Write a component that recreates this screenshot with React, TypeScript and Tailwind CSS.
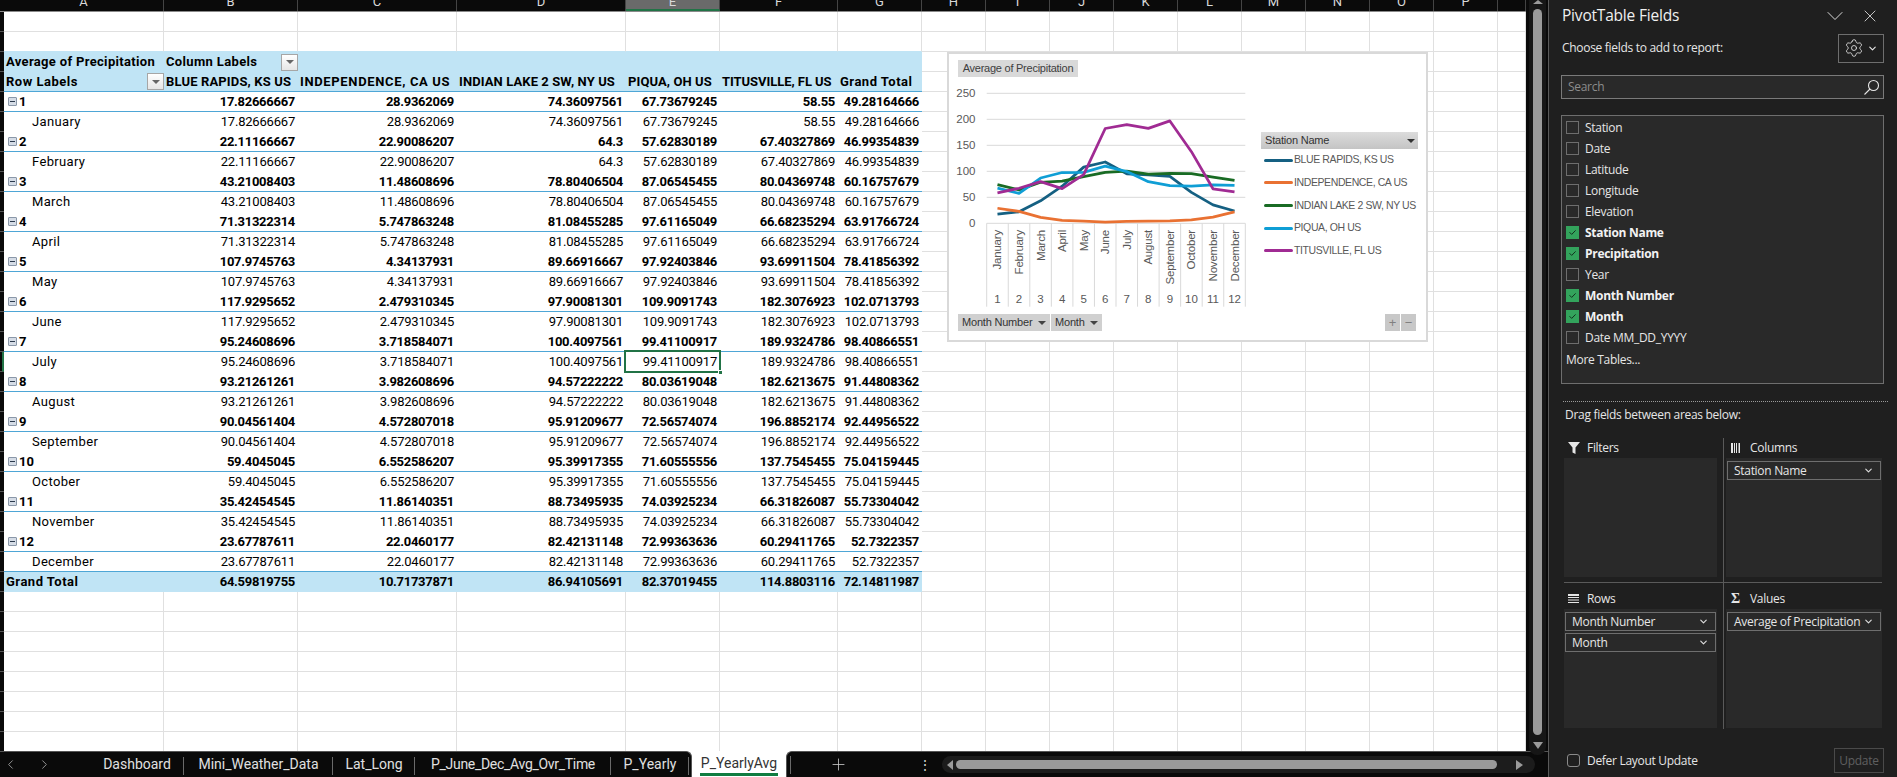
import { ChevronDown, ChevronLeft, ChevronRight, Plus, Settings, X } from "lucide-react";

const COLS = [160, 134, 159, 169, 94, 118, 84, 64, 64, 64, 64, 64, 64, 64, 64, 64, 28];
const LETTERS = ["A", "B", "C", "D", "E", "F", "G", "H", "I", "J", "K", "L", "M", "N", "O", "P", ""];
const STATIONS = [
  { name: "BLUE RAPIDS, KS US", track: "tracking-[0.15px]" },
  { name: "INDEPENDENCE, CA US", track: "tracking-[0.65px]" },
  { name: "INDIAN LAKE 2 SW, NY US", track: "tracking-[0.1px]" },
  { name: "PIQUA, OH US", track: "tracking-[0.1px]" },
  { name: "TITUSVILLE, FL US", track: "tracking-[-0.05px]" },
  { name: "Grand Total", track: "tracking-[0.5px]" },
];
const MONTHS = ["January", "February", "March", "April", "May", "June", "July", "August", "September", "October", "November", "December"];

const VALUES = [
  ["17.82666667", "28.9362069", "74.36097561", "67.73679245", "58.55", "49.28164666"],
  ["22.11166667", "22.90086207", "64.3", "57.62830189", "67.40327869", "46.99354839"],
  ["43.21008403", "11.48608696", "78.80406504", "87.06545455", "80.04369748", "60.16757679"],
  ["71.31322314", "5.747863248", "81.08455285", "97.61165049", "66.68235294", "63.91766724"],
  ["107.9745763", "4.34137931", "89.66916667", "97.92403846", "93.69911504", "78.41856392"],
  ["117.9295652", "2.479310345", "97.90081301", "109.9091743", "182.3076923", "102.0713793"],
  ["95.24608696", "3.718584071", "100.4097561", "99.41100917", "189.9324786", "98.40866551"],
  ["93.21261261", "3.982608696", "94.57222222", "80.03619048", "182.6213675", "91.44808362"],
  ["90.04561404", "4.572807018", "95.91209677", "72.56574074", "196.8852174", "92.44956522"],
  ["59.4045045", "6.552586207", "95.39917355", "71.60555556", "137.7545455", "75.04159445"],
  ["35.42454545", "11.86140351", "88.73495935", "74.03925234", "66.31826087", "55.73304042"],
  ["23.67787611", "22.0460177", "82.42131148", "72.99363636", "60.29411765", "52.7322357"],
];
const TOTALS = ["64.59819755", "10.71737871", "86.94105691", "82.37019455", "114.8803116", "72.14811987"];

const SERIES = [
  { name: "BLUE RAPIDS, KS US", color: "#156082", col: 0 },
  { name: "INDEPENDENCE, CA US", color: "#e97132", col: 1 },
  { name: "INDIAN LAKE 2 SW, NY US", color: "#196b24", col: 2 },
  { name: "PIQUA, OH US", color: "#0f9ed5", col: 3 },
  { name: "TITUSVILLE, FL US", color: "#a02b93", col: 4 },
];

const FIELDS = [
  { name: "Station", on: false },
  { name: "Date", on: false },
  { name: "Latitude", on: false },
  { name: "Longitude", on: false },
  { name: "Elevation", on: false },
  { name: "Station Name", on: true },
  { name: "Precipitation", on: true },
  { name: "Year", on: false },
  { name: "Month Number", on: true },
  { name: "Month", on: true },
  { name: "Date MM_DD_YYYY", on: false },
];

function Tri({ className = "border-t-[#595959]" }: { className?: string }) {
  return <span className={`inline-block w-0 h-0 border-x-[4px] border-x-transparent border-t-[4px] ${className}`} />;
}

function FilterButton() {
  return (
    <span className="w-[17px] h-[17px] shrink-0 flex items-center justify-center bg-gradient-to-b from-white to-[#e6e6e6] border border-[#a6a6a6]">
      <Tri className="border-t-[#666666]" />
    </span>
  );
}

function Cell({ w, className = "", children }: { w: number; className?: string; children?: React.ReactNode }) {
  return (
    <div className={`h-full shrink-0 flex items-center ${className}`} style={{ width: w }}>
      {children}
    </div>
  );
}

function PlainRest({ from }: { from: number }) {
  return (
    <>
      {COLS.slice(from).map((w, i) => (
        <Cell key={i} w={w} className="border-r border-b border-[#e0e0e0]" />
      ))}
    </>
  );
}

function Row({ children, mark }: { children: React.ReactNode; mark?: boolean }) {
  return (
    <div className="flex h-[20px] shrink-0">
      <div className={`w-[4px] h-full shrink-0 border-b border-[#555555] ${mark ? "bg-[#0a0a0a] border-r-2 border-r-[#217346]" : "bg-[#0a0a0a]"}`} />
      {children}
    </div>
  );
}

function ValueCells({ values, kind, selected }: { values: string[]; kind: string; selected?: number }) {
  const bold = kind === "bold" || kind === "total";
  const line = kind === "bold" || kind === "lastMonth" ? "border-b border-[#4ea6d6]" : "";
  return (
    <>
      {values.map((v, i) => (
        <Cell
          key={i}
          w={COLS[i + 1]}
          className={`justify-end pr-[3px] relative ${line} ${kind === "total" ? "bg-[#c0e4f5]" : ""} ${bold ? "font-bold tracking-[-0.28px]" : "tracking-[-0.2px]"}`}
        >
          {v}
          {selected === i && (
            <div className="absolute left-[-2px] top-[-2px] w-[97px] h-[23px] border-2 border-[#217346]">
              <span className="absolute right-[-4px] bottom-[-4px] w-[5px] h-[5px] bg-[#217346] border border-white" />
            </div>
          )}
        </Cell>
      ))}
    </>
  );
}

function Minus() {
  return (
    <span className="w-[9px] h-[9px] mr-[2px] shrink-0 flex items-center justify-center bg-[#d5dce6] border border-[#8a97a8] rounded-[1px]">
      <span className="w-[5px] h-px bg-[#2b3a4d]" />
    </span>
  );
}

function Sheet() {
  const rows: React.ReactNode[] = [];
  rows.push(
    <Row key="e1">
      <PlainRest from={0} />
    </Row>
  );
  rows.push(
    <Row key="e2">
      {COLS.slice(0, 7).map((w, i) => (
        <Cell key={i} w={w} className="border-r border-b border-[#e0e0e0] border-b-[#c0e4f5]" />
      ))}
      <PlainRest from={7} />
    </Row>
  );
  rows.push(
    <Row key="h1">
      <Cell w={160} className="bg-[#c0e4f5] font-bold pl-[2px] tracking-[0.33px] whitespace-nowrap">
        Average of Precipitation
      </Cell>
      <Cell w={134} className="bg-[#c0e4f5] font-bold pl-[2px] justify-between tracking-[0.35px]">
        Column Labels
        <FilterButton />
      </Cell>
      {COLS.slice(2, 7).map((w, i) => (
        <Cell key={i} w={w} className="bg-[#c0e4f5]" />
      ))}
      <PlainRest from={7} />
    </Row>
  );
  rows.push(
    <Row key="h2">
      <Cell w={160} className="bg-[#c0e4f5] border-b border-[#4ea6d6] font-bold pl-[2px] justify-between tracking-[0.5px]">
        Row Labels
        <FilterButton />
      </Cell>
      {STATIONS.map((s, i) => (
        <Cell key={i} w={COLS[i + 1]} className={`bg-[#c0e4f5] border-b border-[#4ea6d6] font-bold pl-[2px] whitespace-nowrap ${s.track}`}>
          {s.name}
        </Cell>
      ))}
      <PlainRest from={7} />
    </Row>
  );
  MONTHS.forEach((m, i) => {
    rows.push(
      <Row key={`n${i}`}>
        <Cell w={160} className="border-b border-[#4ea6d6] font-bold pl-[4px]">
          <Minus />
          {i + 1}
        </Cell>
        <ValueCells values={VALUES[i]} kind="bold" />
        <PlainRest from={7} />
      </Row>
    );
    rows.push(
      <Row key={`m${i}`} mark={i === 6}>
        <Cell w={160} className={`pl-[28px] tracking-[0.35px] ${i === 11 ? "border-b border-[#4ea6d6]" : ""}`}>
          {m}
        </Cell>
        <ValueCells values={VALUES[i]} kind={i === 11 ? "lastMonth" : "month"} selected={i === 6 ? 3 : undefined} />
        <PlainRest from={7} />
      </Row>
    );
  });
  rows.push(
    <Row key="total">
      <Cell w={160} className="bg-[#c0e4f5] font-bold pl-[2px] tracking-[0.5px]">
        Grand Total
      </Cell>
      <ValueCells values={TOTALS} kind="total" />
      <PlainRest from={7} />
    </Row>
  );
  for (let i = 0; i < 8; i++) {
    rows.push(
      <Row key={`t${i}`}>
        <PlainRest from={0} />
      </Row>
    );
  }

  return (
    <div className="w-[1526px] h-[751px] flex flex-col overflow-hidden relative bg-white">
      <div className="flex h-[12px] shrink-0 bg-[#0a0a0a] border-b border-[#8a8a8a] overflow-hidden">
        <div className="w-[4px] shrink-0" />
        {COLS.map((w, i) => (
          <div
            key={i}
            style={{ width: w }}
            className={`shrink-0 h-full text-center leading-[4px] text-[13px] border-r border-[#444444] text-[#d9d9d9] ${i === 4 ? "bg-[#6a6a6a] border-b-2 border-b-[#217346]" : ""}`}
          >
            {LETTERS[i]}
          </div>
        ))}
      </div>
      <div className="flex flex-col text-[13px] text-black">{rows}</div>
      <Chart />
    </div>
  );
}

function Chart() {
  const px = (i: number) => 37.7 + 21.55 * (i + 0.5);
  const py = (v: number) => 146.3 - 0.52 * v;
  const ticks = [250, 200, 150, 100, 50, 0];
  return (
    <div className="absolute left-[947px] top-[52px] w-[481px] h-[290px] bg-white border-2 border-[#d9d9d9] pt-[6px] pl-[9px] flex flex-col font-['Liberation_Sans',sans-serif] text-[#404040]">
      <div className="h-[17px] w-[120px] bg-[#d9d9d9] flex items-center justify-center text-[11px] tracking-[-0.25px] shrink-0">
        Average of Precipitation
      </div>
      <div className="flex h-[235px] shrink-0 -ml-[9px]">
        <svg width="300" height="235" viewBox="0 0 300 235" className="shrink-0">
          {ticks.map((t) => (
            <line key={t} x1="37.7" x2="296.3" y1={py(t)} y2={py(t)} stroke="#d9d9d9" />
          ))}
          {ticks.map((t) => (
            <text key={t} x="26.5" y={py(t) + 4} textAnchor="end" fontSize="11.5" fill="#595959">
              {t}
            </text>
          ))}
          {Array.from({ length: 13 }).map((_, i) => (
            <line key={i} x1={37.7 + 21.55 * i} x2={37.7 + 21.55 * i} y1="146.3" y2="229.7" stroke="#d9d9d9" />
          ))}
          {MONTHS.map((m, i) => (
            <text
              key={m}
              transform={`translate(${px(i) + 4},153) rotate(-90)`}
              textAnchor="end"
              fontSize="11.5"
              letterSpacing="-0.2"
              fill="#595959"
            >
              {m}
            </text>
          ))}
          {MONTHS.map((m, i) => (
            <text key={m} x={px(i)} y="226" textAnchor="middle" fontSize="11.5" fill="#595959">
              {i + 1}
            </text>
          ))}
          {SERIES.map((s) => (
            <polyline
              key={s.name}
              fill="none"
              stroke={s.color}
              strokeWidth="2.75"
              strokeLinejoin="round"
              points={VALUES.map((r, i) => `${px(i)},${py(parseFloat(r[s.col]))}`).join(" ")}
            />
          ))}
        </svg>
        <div className="ml-[12px] mt-[55px] w-[157px] flex flex-col">
          <div className="h-[17px] bg-gradient-to-b from-[#dcdcdc] to-[#c4c4c4] flex items-center justify-between pl-[4px] pr-[3px] text-[11px] tracking-[-0.2px] text-[#333333]">
            Station Name
            <Tri className="border-t-[#333333]" />
          </div>
          {SERIES.map((s) => (
            <div key={s.name} className="h-[22.6px] flex items-center text-[10.5px] tracking-[-0.4px] text-[#595959] whitespace-nowrap">
              <span className="w-[29px] h-[3px] ml-[3px] mr-[1px] shrink-0 rounded-full" style={{ backgroundColor: s.color }} />
              {s.name}
            </div>
          ))}
        </div>
      </div>
      <div className="flex items-center h-[17px] mt-[2px] pr-[10px] text-[#333333] text-[11px] tracking-[-0.2px]">
        <div className="w-[92px] h-full bg-[#d0d0d0] flex items-center justify-between px-[4px]">
          Month Number
          <Tri className="border-t-[#444444]" />
        </div>
        <div className="w-[51px] ml-px h-full bg-[#d0d0d0] flex items-center justify-between px-[4px]">
          Month
          <Tri className="border-t-[#444444]" />
        </div>
        <div className="ml-auto w-[15px] h-full bg-[#c8c8c8] flex items-center justify-center text-[13px] text-[#808080]">+</div>
        <div className="ml-px w-[15px] h-full bg-[#c8c8c8] flex items-center justify-center text-[13px] text-[#808080]">−</div>
      </div>
    </div>
  );
}

function VScroll() {
  return (
    <div className="w-[22px] h-[751px] bg-[#0a0a0a] pl-[3px] pr-[2px]">
      <div className="h-[755px] w-[17px] bg-[#161616] rounded-b-[8px] flex flex-col items-center overflow-hidden relative">
        <span className="w-0 h-0 border-x-[5px] border-x-transparent border-b-[4px] border-b-[#9a9a9a]" />
        <div className="mt-[5px] w-[9px] h-[726px] bg-[#9a9a9a] rounded-full" />
        <span className="mt-[7px] w-0 h-0 border-x-[5px] border-x-transparent border-t-[7px] border-t-[#9a9a9a]" />
      </div>
    </div>
  );
}

function SheetTab({ w, label, className = "" }: { w: number; label: string; className?: string }) {
  return (
    <div className={`h-full flex items-center justify-center relative ${className}`} style={{ width: w }}>
      {label}
      <span className="absolute right-0 top-[5px] h-[18px] w-px bg-[#6a6a6a]" />
    </div>
  );
}

function TabsBar() {
  return (
    <div className="h-[26px] flex bg-white text-[14px] text-[#e0e0e0] font-['Roboto',sans-serif]">
      <div className="w-[692px] h-full flex bg-[#0a0a0a] rounded-tr-[6px] border-t border-r border-[#555555]">
        <div className="w-[90px] flex items-center text-[#9a9a9a] pl-[3px] gap-[19px]">
          <ChevronLeft size={15} strokeWidth={1.5} />
          <ChevronRight size={15} strokeWidth={1.5} />
        </div>
        <SheetTab w={94} label="Dashboard" />
        <SheetTab w={149} label="Mini_Weather_Data" />
        <SheetTab w={82} label="Lat_Long" />
        <SheetTab w={196} label="P_June_Dec_Avg_Ovr_Time" className="tracking-[-0.3px]" />
        <SheetTab w={78} label="P_Yearly" />
      </div>
      <div className="w-[94px] h-full flex flex-col items-center text-[#333333] pt-[2px]">
        <span className="border-b-[3px] border-[#107c41] w-[78px] h-[23px] text-center leading-[20px]">P_YearlyAvg</span>
      </div>
      <div className="flex-1 h-full flex items-center bg-[#0a0a0a] rounded-tl-[6px] border-t border-l border-[#555555]">
        <span className="ml-[3px] h-[18px] w-px bg-[#6a6a6a]" />
        <Plus size={19} strokeWidth={1} className="ml-[38px] text-[#d0d0d0]" />
        <span className="ml-[70px] text-[14px] leading-none text-[#d0d0d0]">⋮</span>
        <div className="ml-[10px] w-[593px] h-[17px] bg-[#1c1c1c] rounded-full flex items-center pl-[5px]">
          <span className="w-0 h-0 border-y-[5px] border-y-transparent border-r-[6px] border-r-[#9a9a9a]" />
          <span className="ml-[3px] w-[541px] h-[9px] rounded-full bg-[#9a9a9a]" />
          <span className="ml-[19px] w-0 h-0 border-y-[5px] border-y-transparent border-l-[7px] border-l-[#9a9a9a]" />
        </div>
      </div>
    </div>
  );
}

function Checkbox({ on }: { on: boolean }) {
  if (on) {
    return (
      <span className="w-[13px] h-[13px] shrink-0 bg-[#33a35c] flex items-center justify-center">
        <svg width="9" height="9" viewBox="0 0 9 9" fill="none">
          <path d="M1.5 4.2 3.7 6.4 7.6 2.4" stroke="#12331f" strokeWidth="1" />
        </svg>
      </span>
    );
  }
  return <span className="w-[13px] h-[13px] shrink-0 border border-[#6e6e6e]" />;
}

function Pill({ label }: { label: string }) {
  return (
    <div className="h-[19px] border border-[#6e6e6e] flex items-center justify-between pl-[6px] pr-[6px] mb-[2px] text-[#e6e6e6]">
      {label}
      <ChevronDown size={11} strokeWidth={2.5} className="text-[#dddddd]" />
    </div>
  );
}

function Zone({ icon, title, fields, right, bottom }: { icon: React.ReactNode; title: string; fields: string[]; right?: boolean; bottom?: boolean }) {
  return (
    <div className={`${bottom ? "h-[146px] pt-[6px]" : "h-[145px] border-b border-[#5a5a5a]"} ${right ? "pl-[2px]" : "pr-[6px] border-r border-[#5a5a5a]"}`}>
      <div className={`h-[20px] flex items-center ${right ? "pl-[5px]" : "pl-[4px]"}`}>
        <span className="w-[19px] shrink-0 flex items-center">{icon}</span>
        {title}
      </div>
      <div className="h-[119px] bg-[#292929] px-px pt-[3px]">
        {fields.map((f) => (
          <Pill key={f} label={f} />
        ))}
      </div>
    </div>
  );
}

function Panel() {
  return (
    <div className="w-[349px] h-[777px] bg-[#1f1f1f] border-l border-[#5a5a5a] text-[#e6e6e6] text-[12px] tracking-[-0.3px] font-['Open_Sans',sans-serif] overflow-hidden">
      <div className="h-[32px] flex items-center pl-[13px] pr-[17px]">
        <span className="text-[15.5px] text-[#f0f0f0] tracking-[-0.2px]">PivotTable Fields</span>
        <ChevronDown size={28} strokeWidth={0.8} className="ml-auto mr-[11px]" />
        <X size={20} strokeWidth={1} />
      </div>
      <div className="h-[28px] mt-[2px] flex items-center justify-between pl-[13px] pr-[13px]">
        Choose fields to add to report:
        <div className="w-[46px] h-[29px] border border-[#6e6e6e] flex items-center justify-center gap-[3px]">
          <Settings size={20} strokeWidth={1} />
          <ChevronDown size={11} strokeWidth={2.5} />
        </div>
      </div>
      <div className="h-[24px] mt-[13px] ml-[12px] mr-[13px] border border-[#7a7a7a] bg-[#292929] flex items-center justify-between pl-[6px] pr-[3px] text-[#8c8c8c]">
        Search
        <svg width="17" height="17" viewBox="0 0 17 17" fill="none" stroke="#e6e6e6" strokeWidth="1.1">
          <circle cx="10.5" cy="6.5" r="5" />
          <path d="M7 10 1.5 15.5" />
        </svg>
      </div>
      <div className="h-[269px] mt-[16px] ml-[12px] mr-[13px] border border-[#6e6e6e] bg-[#292929] pl-[4px] pt-[1px]">
        {FIELDS.map((f) => (
          <div key={f.name} className={`h-[21px] flex items-center gap-[6px] ${f.on ? "font-bold text-[#f2f2f2]" : ""}`}>
            <Checkbox on={f.on} />
            {f.name}
          </div>
        ))}
        <div className="mt-[2px] h-[20px] flex items-center">More Tables...</div>
      </div>
      <div className="mt-[17px] ml-[14px] mr-[9px] border-t border-dotted border-[#9a9a9a]" />
      <div className="ml-[16px] mt-[3px] h-[19px] flex items-center">Drag fields between areas below:</div>
      <div className="grid grid-cols-[160px_158px] ml-[15px] mt-[14px]">
        <Zone
          title="Filters"
          fields={[]}
          icon={
            <svg width="12" height="12" viewBox="0 0 12 12" fill="#e6e6e6">
              <path d="M0 0h12L7.5 5.5V12l-3-1.5V5.5z" />
            </svg>
          }
        />
        <Zone
          right
          title="Columns"
          fields={["Station Name"]}
          icon={
            <svg width="10" height="10" viewBox="0 0 10 10" fill="#e6e6e6">
              <path d="M0 0h2v10H0zM3 0h1v10H3zM5 0h1v10H5zM7.5 0h1.5v10H7.5z" />
            </svg>
          }
        />
        <Zone
          bottom
          title="Rows"
          fields={["Month Number", "Month"]}
          icon={
            <svg width="11" height="10" viewBox="0 0 11 10" fill="#e6e6e6">
              <path d="M0 0h11v2H0zM0 3h11v1H0zM0 5.5h11v1H0zM0 8h11v1H0z" />
            </svg>
          }
        />
        <Zone
          right
          bottom
          title="Values"
          fields={["Average of Precipitation"]}
          icon={<span className="font-['Liberation_Serif',serif] font-bold text-[14px] leading-none">Σ</span>}
        />
      </div>
      <div className="mt-[19px] ml-[18px] mr-[13px] flex items-center">
        <span className="w-[13px] h-[13px] border border-[#8a8a8a] rounded-[3px] mr-[7px]" />
        Defer Layout Update
        <div className="ml-auto w-[50px] h-[25px] border border-[#4a4a4a] flex items-center justify-center text-[#5f5f5f]">Update</div>
      </div>
    </div>
  );
}

export default function App() {
  return (
    <div className="w-[1897px] h-[777px] flex overflow-hidden bg-[#0a0a0a] font-['Roboto',sans-serif]">
      <div className="w-[1548px] h-full flex flex-col">
        <div className="flex h-[751px]">
          <Sheet />
          <VScroll />
        </div>
        <TabsBar />
      </div>
      <Panel />
    </div>
  );
}
